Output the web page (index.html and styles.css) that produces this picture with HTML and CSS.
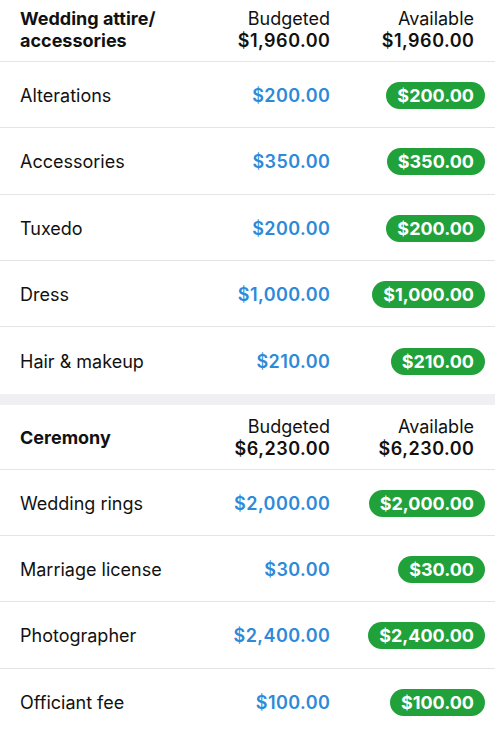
FILE: index.html
```html
<!DOCTYPE html>
<html>
<head>
<meta charset="utf-8">
<link rel="stylesheet" href="styles.css">
</head>
<body>
<div class="list">
  <section class="group first">
    <div class="head">
      <div class="gname">Wedding attire/<br>accessories</div>
      <div class="hcol budget"><span>Budgeted</span><b>$1,960.00</b></div>
      <div class="hcol avail"><span>Available</span><b>$1,960.00</b></div>
    </div>
    <div class="row"><div class="name">Alterations</div><div class="bud">$200.00</div><div class="av"><span class="pill">$200.00</span></div></div>
    <div class="row"><div class="name">Accessories</div><div class="bud">$350.00</div><div class="av"><span class="pill">$350.00</span></div></div>
    <div class="row"><div class="name">Tuxedo</div><div class="bud">$200.00</div><div class="av"><span class="pill">$200.00</span></div></div>
    <div class="row"><div class="name">Dress</div><div class="bud">$1,000.00</div><div class="av"><span class="pill">$1,000.00</span></div></div>
    <div class="row last"><div class="name">Hair &amp; makeup</div><div class="bud">$210.00</div><div class="av"><span class="pill">$210.00</span></div></div>
  </section>
  <div class="gap"></div>
  <section class="group">
    <div class="head">
      <div class="gname">Ceremony</div>
      <div class="hcol budget"><span>Budgeted</span><b>$6,230.00</b></div>
      <div class="hcol avail"><span>Available</span><b>$6,230.00</b></div>
    </div>
    <div class="row"><div class="name">Wedding rings</div><div class="bud">$2,000.00</div><div class="av"><span class="pill">$2,000.00</span></div></div>
    <div class="row"><div class="name">Marriage license</div><div class="bud">$30.00</div><div class="av"><span class="pill">$30.00</span></div></div>
    <div class="row"><div class="name">Photographer</div><div class="bud">$2,400.00</div><div class="av"><span class="pill">$2,400.00</span></div></div>
    <div class="row"><div class="name">Officiant fee</div><div class="bud">$100.00</div><div class="av"><span class="pill">$100.00</span></div></div>
  </section>
</div>
</body>
</html>
```
FILE: styles.css
```css
html, body {
  margin: 0;
  padding: 0;
  background: #ffffff;
  overflow: hidden;
}
body {
  font-family: Inter, "Noto Sans", sans-serif;
  font-size: 18px;
  color: #111111;
  width: 495px;
  height: 731px;
}
.list {
  margin-top: -3px;
}
.head,
.row {
  display: grid;
  grid-template-columns: 1fr 130px 155px;
  align-items: center;
  padding: 0 10px 0 20px;
  border-bottom: 1px solid #e4e4e7;
  box-sizing: border-box;
}
.head {
  height: 65px;
  padding-top: 11px;
  padding-bottom: 10px;
  line-height: 22px;
}
.gname {
  font-weight: 700;
}
.hcol {
  display: flex;
  flex-direction: column;
  align-items: flex-end;
}
.hcol span {
  font-weight: 400;
}
.hcol b {
  font-weight: 600;
  letter-spacing: 0.5px;
  margin-right: -0.5px;
}
.avail {
  padding-right: 11px;
}
.row {
  height: 66.33px;
  padding-top: 2px;
}
.row.last {
  border-bottom: none;
}
.name {
  font-weight: 400;
}
.bud {
  text-align: right;
  color: #2d8ad9;
  font-weight: 600;
  letter-spacing: 0.45px;
  margin-right: -0.45px;
}
.av {
  display: flex;
  justify-content: flex-end;
}
.pill {
  background: #21a13a;
  color: #ffffff;
  font-weight: 700;
  height: 27px;
  line-height: 27px;
  border-radius: 14px;
  padding: 0 11px;
}
.gap {
  height: 11px;
  background: #f0eff4;
}
```
